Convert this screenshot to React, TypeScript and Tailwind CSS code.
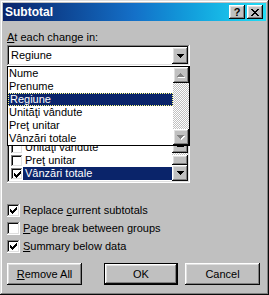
import React from "react";

const raised =
  "shadow-[inset_-1px_-1px_#0a0a0a,inset_1px_1px_#ffffff,inset_-2px_-2px_#808080,inset_2px_2px_#dfdfdf]";
const sunken =
  "shadow-[inset_-1px_-1px_#ffffff,inset_1px_1px_#808080,inset_-2px_-2px_#dfdfdf,inset_2px_2px_#0a0a0a]";
const dither =
  "bg-[repeating-conic-gradient(#c0c0c0_0%_25%,#ffffff_0%_50%)] bg-[length:2px_2px]";

function ArrowDown({ color = "#000" }: { color?: string }) {
  return (
    <svg width="7" height="4" viewBox="0 0 7 4" shapeRendering="crispEdges">
      <path d="M0 0h7v1h-7z M1 1h5v1h-5z M2 2h3v1h-3z M3 3h1v1h-1z" fill={color} />
    </svg>
  );
}

function ArrowUp({ color = "#000" }: { color?: string }) {
  return (
    <svg width="7" height="4" viewBox="0 0 7 4" shapeRendering="crispEdges">
      <path d="M3 0h1v1h-1z M2 1h3v1h-3z M1 2h5v1h-5z M0 3h7v1h-7z" fill={color} />
    </svg>
  );
}

function DisabledArrow({ up }: { up?: boolean }) {
  const d = up
    ? "M3 0h1v1h-1z M2 1h3v1h-3z M1 2h5v1h-5z M0 3h7v1h-7z"
    : "M0 0h7v1h-7z M1 1h5v1h-5z M2 2h3v1h-3z M3 3h1v1h-1z";
  return (
    <svg width="8" height="5" viewBox="0 0 8 5" shapeRendering="crispEdges">
      <path d={d} fill="#ffffff" transform="translate(1,1)" />
      <path d={d} fill="#808080" />
    </svg>
  );
}

function Check() {
  return (
    <svg width="7" height="7" viewBox="0 0 7 7" shapeRendering="crispEdges">
      <path
        d="M0 2h1v3h-1z M1 3h1v3h-1z M2 4h1v3h-1z M3 3h1v3h-1z M4 2h1v3h-1z M5 1h1v3h-1z M6 0h1v3h-1z"
        fill="#000"
      />
    </svg>
  );
}

function CheckBox({ checked, small }: { checked?: boolean; small?: boolean }) {
  return (
    <div
      className={`${small ? "w-[12px] h-[12px]" : "w-[13px] h-[13px]"} shrink-0 bg-white flex items-center justify-center ${sunken}`}
    >
      {checked && <Check />}
    </div>
  );
}

function Combo({ value }: { value: string }) {
  return (
    <div className={`w-[183px] h-[21px] bg-white p-[2px] flex ${sunken}`}>
      <div className="flex-1 pl-[2px] flex items-center">{value}</div>
      <div className={`w-[16px] h-[17px] bg-[#c0c0c0] flex items-center justify-center ${raised}`}>
        <ArrowDown />
      </div>
    </div>
  );
}

function ScrollBtn({ children }: { children: React.ReactNode }) {
  return (
    <div className={`w-[16px] h-[16px] shrink-0 bg-[#c0c0c0] flex items-center justify-center ${raised}`}>
      {children}
    </div>
  );
}

export default function App() {
  const dropItems = ["Nume", "Prenume", "Regiune", "Unităţi vândute", "Preţ unitar", "Vânzări totale"];
  return (
    <div
      className={`w-[269px] h-[295px] bg-[#c0c0c0] p-[3px] flex flex-col font-['Liberation_Sans',Arial,sans-serif] text-[11px] leading-[13px] text-black shadow-[inset_-1px_-1px_#0a0a0a,inset_1px_1px_#dfdfdf,inset_-2px_-2px_#808080,inset_2px_2px_#ffffff]`}
    >
      {/* Title bar */}
      <div className="h-[18px] shrink-0 flex items-center bg-gradient-to-r from-[#0a246a] via-[#1470c8] to-[#22dcf4] pl-[2px] pr-[3px]">
        <span className="flex-1 text-white font-bold text-[12px]">Subtotal</span>
        <div className="flex gap-[2px]">
          <div className={`w-[16px] h-[14px] bg-[#c0c0c0] flex items-center justify-center font-bold text-[11px] leading-[11px] ${raised}`}>
            ?
          </div>
          <div className={`w-[16px] h-[14px] bg-[#c0c0c0] flex items-center justify-center ${raised}`}>
            <svg width="8" height="7" viewBox="0 0 8 7" shapeRendering="crispEdges">
              <path
                d="M0 0h2v1h-2z M6 0h2v1h-2z M1 1h2v1h-2z M5 1h2v1h-2z M2 2h4v1h-4z M3 3h2v1h-2z M2 4h4v1h-4z M1 5h2v1h-2z M5 5h2v1h-2z M0 6h2v1h-2z M6 6h2v1h-2z"
                fill="#000"
              />
            </svg>
          </div>
        </div>
      </div>

      {/* Body */}
      <div className="flex flex-col px-[4px]">
        <div className="mt-[10px]">
          <span className="underline">A</span>t each change in:
        </div>
        <div className="mt-[1px]">
          <Combo value="Regiune" />
        </div>

        <div className="relative flex flex-col">
          {/* area covered by the open dropdown */}
          <div className="h-[69px]" />
          <div className={`w-[183px] h-[48px] bg-white p-[2px] flex ${sunken}`}>
            <div className="flex-1 flex flex-col justify-end overflow-hidden pb-[1px]">
              {[
                { t: "Unităţi vândute", c: false },
                { t: "Preţ unitar", c: false },
                { t: "Vânzări totale", c: true, sel: true },
              ].map((r) => (
                <div key={r.t} className="h-[13px] shrink-0 flex items-start pl-[2px]">
                  <div className="mt-[1px]">
                    <CheckBox small checked={r.c} />
                  </div>
                  <div className={`flex-1 h-[13px] pl-[2px] ${r.sel ? "bg-[#0a246a] text-white" : ""}`}>
                    {r.t}
                  </div>
                </div>
              ))}
            </div>
            <div className="w-[16px] flex flex-col">
              <ScrollBtn>
                <ArrowUp />
              </ScrollBtn>
              <div className={`flex-1 flex flex-col ${dither}`}>
                <div className={`mt-auto w-[16px] h-[10px] bg-[#c0c0c0] ${raised}`} />
              </div>
              <ScrollBtn>
                <ArrowDown />
              </ScrollBtn>
            </div>
          </div>

          {/* Open dropdown list */}
          <div className="absolute top-0 left-0 w-[183px] h-[80px] bg-white border border-black flex">
            <div className="flex-1 flex flex-col">
              {dropItems.map((t) => (
                <div
                  key={t}
                  className={`h-[13px] pl-[1px] ${
                    t === "Regiune"
                      ? "bg-[#0a246a] text-white border border-dotted border-[#ffff80] leading-[11px]"
                      : ""
                  }`}
                >
                  {t}
                </div>
              ))}
            </div>
            <div className="w-[16px] flex flex-col">
              <ScrollBtn>
                <DisabledArrow up />
              </ScrollBtn>
              <div className={`flex-1 ${dither}`} />
              <ScrollBtn>
                <DisabledArrow />
              </ScrollBtn>
            </div>
          </div>
        </div>

        {/* Options */}
        <div className="mt-[21px] flex flex-col gap-[5px]">
          <div className="flex items-center gap-[3px] h-[13px]">
            <CheckBox checked />
            <span>
              Replace <span className="underline">c</span>urrent subtotals
            </span>
          </div>
          <div className="flex items-center gap-[3px] h-[13px]">
            <CheckBox />
            <span>
              <span className="underline">P</span>age break between groups
            </span>
          </div>
          <div className="flex items-center gap-[3px] h-[13px]">
            <CheckBox checked />
            <span>
              <span className="underline">S</span>ummary below data
            </span>
          </div>
        </div>

        {/* Buttons */}
        <div className="mt-[10px] flex">
          <div className={`w-[75px] h-[22px] flex items-center justify-center ${raised}`}>
            <span>
              <span className="underline">R</span>emove All
            </span>
          </div>
          <div className="ml-[22px] w-[74px] h-[22px] border border-black">
            <div className={`w-full h-full flex items-center justify-center ${raised}`}>OK</div>
          </div>
          <div className={`ml-[7px] w-[75px] h-[22px] flex items-center justify-center ${raised}`}>
            Cancel
          </div>
        </div>
      </div>
    </div>
  );
}
